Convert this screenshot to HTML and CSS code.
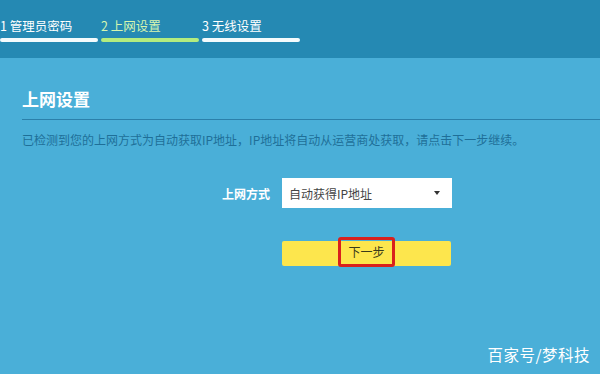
FILE: index.html
```html
<!DOCTYPE html>
<html lang="zh-CN">
<head>
    <meta charset="UTF-8">
    <meta name="viewport" content="width=device-width, initial-scale=1.0">
    <title>上网设置</title>
    <link rel="stylesheet" href="styles.css">
</head>
<body>
    <div id="header">
        <div class="steps">
            <div class="step done">
                <div class="step-name">1 管理员密码</div>
                <div class="step-bar"></div>
            </div>
            <div class="step current">
                <div class="step-name">2 上网设置</div>
                <div class="step-bar"></div>
            </div>
            <div class="step">
                <div class="step-name">3 无线设置</div>
                <div class="step-bar"></div>
            </div>
        </div>
    </div>

    <div id="content">
        <h2 class="title">上网设置</h2>
        <p class="desc">已检测到您的上网方式为自动获取IP地址，IP地址将自动从运营商处获取，请点击下一步继续。</p>

        <div class="form">
            <div class="label">上网方式</div>
            <div class="select">
                <span>自动获得IP地址</span>
                <span class="arrow"></span>
            </div>
            <div></div>
            <div class="next">
                <span class="mark">下一步</span>
            </div>
        </div>
    </div>

    <div class="watermark">百家号/梦科技</div>
</body>
</html>
```

FILE: styles.css
```css
body{
    margin: 0;
    background-color: #4aafd8;
    font-family: "Noto Sans CJK SC", "Liberation Sans", sans-serif;
    height: 374px;
    overflow: hidden;
}
#header{
    background-color: #2589b3;
    height: 58px;
    box-sizing: border-box;
    padding-top: 18px;
}
.steps{
    display: flex;
    gap: 3px;
}
.step{
    width: 98px;
}
.step-name{
    color: white;
    font-size: 12.5px;
    line-height: 16px;
    height: 16px;
    margin-bottom: 4px;
    white-space: nowrap;
}
.current .step-name{
    color: #d6f6b0;
}
.step-bar{
    height: 4px;
    background-color: #f4fbfd;
    border-radius: 2px;
}
.current .step-bar{
    background-color: #b3ec7f;
}
#content{
    padding: 29px 0 0 22px;
}
.title{
    margin: 0;
    color: white;
    font-size: 17px;
    font-weight: bold;
    line-height: 24px;
    padding-bottom: 8px;
    border-bottom: 1px solid #2b80aa;
}
.desc{
    margin: 11px 0 0;
    color: #1f6f98;
    font-size: 12px;
    line-height: 18px;
}
.form{
    display: grid;
    grid-template-columns: 248px 170px;
    column-gap: 12px;
    row-gap: 33px;
    margin-top: 29px;
    align-items: center;
}
.label{
    text-align: right;
    color: white;
    font-size: 12px;
    font-weight: bold;
}
.select{
    background-color: white;
    height: 30px;
    display: flex;
    align-items: center;
    justify-content: space-between;
    padding: 0 12px 0 7px;
    font-size: 12px;
    color: #444;
    box-sizing: border-box;
}
.arrow{
    width: 0;
    height: 0;
    border-left: 3.5px solid transparent;
    border-right: 3.5px solid transparent;
    border-top: 4px solid #333;
}
.next{
    background-color: #fde64d;
    height: 25px;
    width: 169px;
    border-radius: 2px;
    display: flex;
    align-items: center;
    justify-content: center;
}
.mark{
    border: 3px solid #d9211d;
    border-radius: 3px;
    width: 57px;
    height: 30px;
    box-sizing: border-box;
    margin-bottom: 4px;
    display: flex;
    align-items: center;
    justify-content: center;
    font-size: 12px;
    color: #3a3a1a;
}
.watermark{
    position: absolute;
    right: 10px;
    bottom: 9px;
    color: white;
    font-size: 15.5px;
    letter-spacing: 0.5px;
}
```
